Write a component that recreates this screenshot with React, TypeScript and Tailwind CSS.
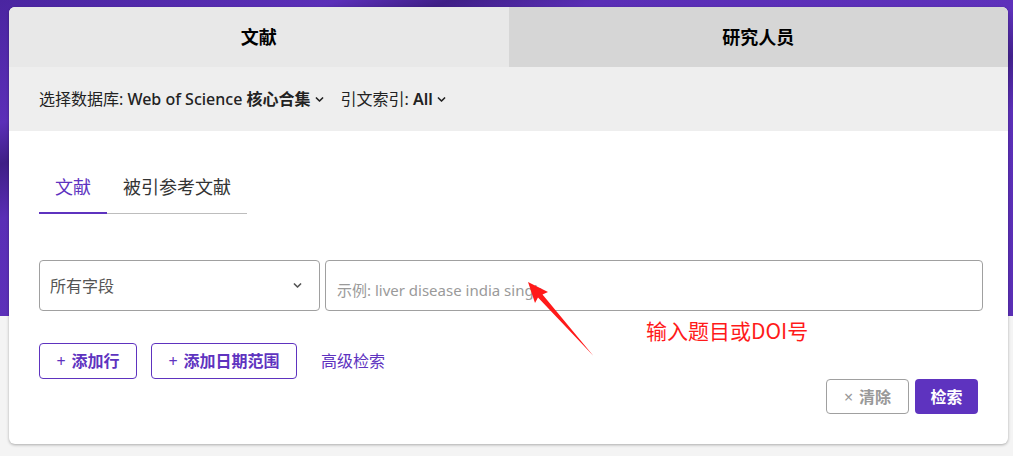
import React from "react";

const Chevron = ({ className = "" }: { className?: string }) => (
  <svg className={className} width="11" height="11" viewBox="0 0 10 10" fill="none">
    <path d="M2.2 3.6 L5 6.4 L7.8 3.6" stroke="currentColor" strokeWidth="1.5" strokeLinecap="round" strokeLinejoin="round" />
  </svg>
);

export default function App() {
  const font = { fontFamily: '"Noto Sans", "Noto Sans CJK SC", sans-serif' };
  return (
    <div className="relative w-full h-[456px] bg-[#f4f4f4] overflow-hidden" style={font}>
      <div className="absolute left-0 top-0 w-full h-[316px] bg-[linear-gradient(160deg,#4a25a0_0%,#5b2fb8_18%,#3f1f86_24%,#5a2eb6_32%,#5e31bb_55%,#42218c_62%,#5b2fb7_70%,#5a2eb5_100%)]" />
      <div className="relative ml-[9px] mt-[7px] w-[999px] bg-white rounded-md overflow-hidden shadow-[0_1px_3px_rgba(0,0,0,0.3)]">
        <div className="flex h-[60px]">
          <div className="w-1/2 bg-[#e8e8e8] flex items-center justify-center text-[18px] font-bold text-black">文献</div>
          <div className="w-1/2 bg-[#d6d6d6] flex items-center justify-center text-[18px] font-bold text-black">研究人员</div>
        </div>
        <div className="h-[64px] bg-[#eeeeee] flex items-center pl-[30px] text-[16px] text-[#222]">
          <span>选择数据库:&nbsp;</span>
          <span className="font-medium">Web of Science&nbsp;</span>
          <span className="font-bold">核心合集</span>
          <Chevron className="ml-[3px] mt-[1px] text-[#222]" />
          <span className="ml-[16px]">引文索引:&nbsp;</span>
          <span className="font-semibold">All</span>
          <Chevron className="ml-[3px] mt-[1px] text-[#222]" />
        </div>
        <div className="pl-[30px] pr-[25px] pb-[30px]">
          <div className="pt-[44px] flex">
            <div className="px-4 pb-[13px] border-b-2 border-[#5e33bf] text-[18px] leading-[24px] text-[#5e33bf]">文献</div>
            <div className="px-4 pb-[13px] border-b-2 border-transparent relative text-[18px] leading-[24px] text-[#333]">
              被引参考文献
              <div className="absolute left-0 right-0 bottom-[-2px] h-px bg-[#bdbdbd]" />
            </div>
          </div>
          <div className="mt-[46px] flex gap-[5px] h-[51px]">
            <div className="w-[281px] border border-[#a0a0a0] rounded-[4px] flex items-center justify-between pl-[10px] pr-[16px] text-[16px] text-[#555]">
              <span>所有字段</span>
              <Chevron className="text-[#555]" />
            </div>
            <div className="flex-1 border border-[#a0a0a0] rounded-[4px] flex items-end pl-[11px] pb-[9px] text-[15px] text-[#9a9a9a]">
              <span>示例: liver disease india singh</span>
            </div>
          </div>
          <div className="mt-[32px] flex items-center h-[36px]">
            <div className="w-[98px] h-[36px] border border-[#5e33bf] rounded-[4px] flex items-center justify-center text-[16px] text-[#5e33bf] font-bold">
              <span className="font-normal mr-[6px]">+</span>添加行
            </div>
            <div className="ml-[14px] w-[146px] h-[36px] border border-[#5e33bf] rounded-[4px] flex items-center justify-center text-[16px] text-[#5e33bf] font-bold">
              <span className="font-normal mr-[6px]">+</span>添加日期范围
            </div>
            <div className="ml-[24px] text-[16px] text-[#5e33bf]">高级检索</div>
          </div>
          <div className="flex justify-end gap-[6px] pr-[5px]">
            <div className="w-[83px] h-[35px] border border-[#a0a0a0] rounded-[4px] flex items-center justify-center text-[16px] text-[#999] font-bold">
              <span className="font-normal mr-[6px]">×</span>清除
            </div>
            <div className="w-[63px] h-[35px] bg-[#5e33bf] rounded-[4px] flex items-center justify-center text-[16px] text-white font-bold">检索</div>
          </div>
        </div>
      </div>
      <div className="absolute left-[646px] top-[316px] text-[21px] leading-[28px] text-[#ff1a1a]" style={{ fontFamily: '"Noto Sans CJK SC", "Liberation Sans", sans-serif' }}>
        输入题目或DOI号
      </div>
      <svg className="absolute left-0 top-0 pointer-events-none" width="1013" height="456" viewBox="0 0 1013 456">
        <polygon points="528,282 548,292 542.5,294.5 593.5,356 538,297.5 535,303" fill="#ff1a1a" />
      </svg>
    </div>
  );
}
